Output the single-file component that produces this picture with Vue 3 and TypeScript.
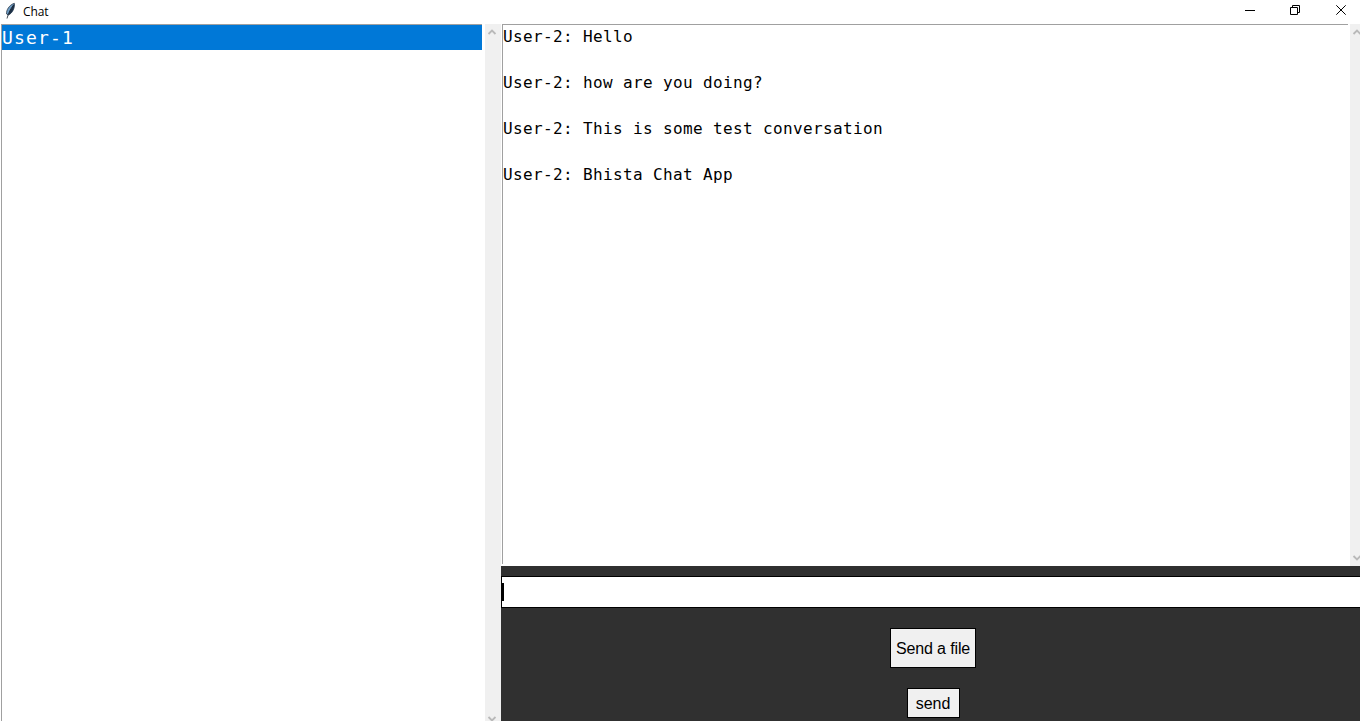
<script setup lang="ts">
import { ref } from 'vue'

const users = ref<string[]>(['User-1'])
const messages = ref<string[]>([
  'User-2: Hello',
  'User-2: how are you doing?',
  'User-2: This is some test conversation',
  'User-2: Bhista Chat App',
])
</script>

<template>
  <div class="window">
    <header class="titlebar">
      <svg class="feather" width="12" height="18" viewBox="0 0 12 18">
        <path d="M1.600 12C1 8.500 4 3 9.300 1.300C10 5 8 11 3.400 13Z" fill="#6e9cc4" stroke="#1c2a3a" stroke-width=".7" />
        <path d="M9.300 1.500C9.800 5 8 10.500 3.400 13L4.500 9.500Z" fill="#1d3046" />
        <path d="M8.500 3C5.500 7 3.400 11 2 16.500" fill="none" stroke="#111c28" stroke-width=".8" />
      </svg>
      <span class="title">Chat</span>
      <div class="controls">
        <svg width="110" height="22" viewBox="0 0 110 22" fill="none" stroke="#000" stroke-width="1">
          <path d="M5 10.500H15M50.500 7.500H57.500V14.500H50.500ZM52.500 7V5.500H59.500V12.500H58M96.300 5.300L105.700 14.700M105.700 5.300L96.300 14.700" />
        </svg>
      </div>
    </header>
    <main class="body">
      <aside class="sidebar">
        <div class="users">
          <div v-for="user in users" :key="user" class="user">{{ user }}</div>
        </div>
        <div class="scroll side-scroll">
          <svg width="10" height="8" viewBox="0 0 10 8"><path d="M1.500 6L5 2.500L8.500 6" /></svg>
          <svg width="10" height="8" viewBox="0 0 10 8"><path d="M1.500 2L5 5.500L8.500 2" /></svg>
        </div>
      </aside>
      <section class="chat">
        <div class="history">
          <div class="messages">
            <p v-for="message in messages" :key="message">{{ message }}</p>
          </div>
          <div class="scroll chat-scroll">
            <svg width="10" height="8" viewBox="0 0 10 8"><path d="M1.500 6L5 2.500L8.500 6" /></svg>
            <svg width="10" height="8" viewBox="0 0 10 8"><path d="M1.500 2L5 5.500L8.500 2" /></svg>
          </div>
        </div>
        <div class="entry"><span class="caret"></span></div>
        <div class="actions">
          <button class="file">Send a file</button>
          <button class="send">send</button>
        </div>
      </section>
    </main>
  </div>
</template>

<style>
body { margin: 0; overflow: hidden; }
</style>

<style scoped>
.window {
  width: 1360px;
  height: 721px;
  display: flex;
  flex-direction: column;
  overflow: hidden;
  background: #fff;
  color: #000;
}
.titlebar {
  height: 24px;
  flex: none;
  display: flex;
  align-items: flex-start;
}
.feather { margin: 2px 0 0 5px; }
.title {
  margin: 3px 0 0 6px;
  font: 12px/17px "Open Sans", "Noto Sans", sans-serif;
  letter-spacing: -.1px;
}
.controls { margin-left: auto; width: 120px; height: 22px; }
.body { flex: 1; min-height: 0; display: flex; }
.sidebar { width: 501px; flex: none; display: flex; }
.users {
  width: 481px;
  border-top: 1px solid #a0a0a0;
  border-left: 1px solid #a0a0a0;
  box-sizing: border-box;
  margin-left: 1px;
}
.user {
  height: 25px;
  background: #0078d7;
  color: #fff;
  font: 18px/25px "DejaVu Sans Mono", monospace;
  letter-spacing: 1.16px;
}
.scroll {
  box-sizing: border-box;
  display: flex;
  flex-direction: column;
  justify-content: space-between;
  background: #f0f0f0;
}
.scroll svg { flex: none; fill: none; stroke: #b9b9b9; stroke-width: 1.8; display: block; }
.side-scroll { width: 16px; height: 699px; margin-left: 3px; padding: 4px 0 0 2px; }
.chat {
  flex: 1;
  min-width: 0;
  display: flex;
  flex-direction: column;
  background: #303030;
}
.history { height: 542px; flex: none; display: flex; background: #fff; }
.messages {
  width: 846px;
  height: 540px;
  box-sizing: border-box;
  margin-left: 1px;
  border-top: 1px solid #a0a0a0;
  border-left: 1px solid #a0a0a0;
}
.messages p {
  margin: 0 0 23px;
  font: 16px/23px "DejaVu Sans Mono", monospace;
  letter-spacing: .37px;
  white-space: pre;
}
.chat-scroll { width: 10px; margin-left: auto; padding: 4px 0 4px 2px; overflow: hidden; }
.entry {
  height: 32px;
  box-sizing: border-box;
  margin-top: 10px;
  border: 1px solid #000;
  border-right: 0;
  background: #fff;
  display: flex;
  align-items: center;
}
.caret { width: 2px; height: 18px; background: #000; }
.actions {
  display: flex;
  flex-direction: column;
  align-items: center;
  padding: 20px 0 0 5px;
  gap: 20px;
}
button {
  box-sizing: border-box;
  padding: 2px 0 0;
  border: 1px solid #000;
  border-radius: 0;
  background: #f0f0f0;
  color: #000;
  font: 16px "Liberation Sans", Arial, sans-serif;
  white-space: nowrap;
}
.file { width: 86px; height: 40px; letter-spacing: -.13px; }
.send { width: 53px; height: 30px; }
</style>
